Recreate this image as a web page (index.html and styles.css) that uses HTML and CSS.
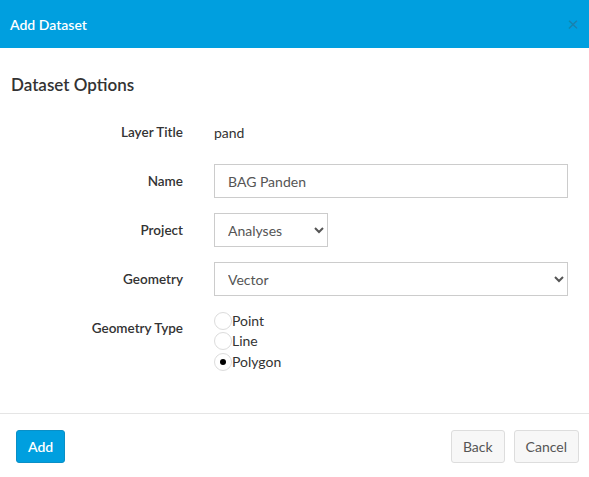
FILE: index.html
```html
<!DOCTYPE html>
<html lang="en">
<head>
<meta charset="UTF-8">
<title>Add Dataset</title>
<link rel="stylesheet" href="styles.css">
</head>
<body>

<div class="modal">
<div class="modal-header">
<h4>Add Dataset</h4>
<span class="close">&times;</span>
</div>

<div class="modal-body">
<h3>Dataset Options</h3>

<div class="form-row">
<label>Layer Title</label>
<div class="static">pand</div>
</div>

<div class="form-row">
<label>Name</label>
<input type="text" class="field" value="BAG Panden">
</div>

<div class="form-row">
<label>Project</label>
<select class="field small">
<option>Analyses</option>
</select>
</div>

<div class="form-row">
<label>Geometry</label>
<select class="field">
<option>Vector</option>
</select>
</div>

<div class="form-row radios-row">
<label>Geometry Type</label>
<div class="radios">
<label class="radio"><input type="radio" name="gtype">Point</label>
<label class="radio"><input type="radio" name="gtype">Line</label>
<label class="radio"><input type="radio" name="gtype" checked>Polygon</label>
</div>
</div>
</div>

<div class="modal-footer">
<button class="btn btn-primary">Add</button>
<div class="right">
<button class="btn">Back</button>
<button class="btn">Cancel</button>
</div>
</div>
</div>

</body>
</html>
```

FILE: styles.css
```css
* {
margin: 0;
padding: 0;
box-sizing: border-box;
font-family: Lato, "Open Sans", sans-serif;
}

body {
background: #ffffff;
color: #333333;
font-size: 14px;
}

/* Header */
.modal-header {
height: 48px;
background-color: #009fdf;
display: flex;
align-items: center;
justify-content: space-between;
padding: 0 10px 0 10px;
}

.modal-header h4 {
color: #ffffff;
font-size: 14px;
font-weight: 600;
}

.close {
color: #1a82b0;
font-size: 20px;
line-height: 1;
margin-top: -2px;
}

/* Body */
.modal-body {
padding: 25px 21px 0 11px;
height: 365px;
}

.modal-body h3 {
font-size: 17px;
font-weight: 600;
color: #333333;
line-height: 24px;
margin-bottom: 18px;
}

.form-row {
display: grid;
grid-template-columns: 172px 1fr;
column-gap: 31px;
align-items: center;
min-height: 34px;
margin-bottom: 15px;
}

.form-row > label {
text-align: right;
font-weight: 600;
font-size: 13.5px;
color: #333333;
}

.static {
font-size: 14px;
color: #333333;
}

.field {
height: 34px;
border: 1px solid #cccccc;
border-radius: 0;
background: #ffffff;
color: #555555;
font-size: 14px;
padding: 0 13px;
width: 100%;
}

select.field {
padding: 0 9px;
}

.field.small {
width: 114px;
}

.radios-row {
align-items: start;
}

.radios-row > label {
padding-top: 9px;
}

.radios {
display: flex;
flex-direction: column;
gap: 1px;
}

.radio {
display: flex;
align-items: center;
font-size: 14px;
color: #333333;
height: 19px;
}

.radio input {
appearance: none;
-webkit-appearance: none;
width: 18px;
height: 18px;
margin: 0;
border: 1px solid #dcdcdc;
border-radius: 50%;
background: #ffffff;
display: flex;
align-items: center;
justify-content: center;
}

.radio input:checked::after {
content: "";
width: 6px;
height: 6px;
border-radius: 50%;
background: #000000;
}

.radio:last-child {
margin-top: 1px;
}

/* Footer */
.modal-footer {
border-top: 1px solid #e5e5e5;
display: flex;
justify-content: space-between;
padding: 16px 10px 0 16px;
}

.right {
display: flex;
gap: 9px;
}

.btn {
height: 33px;
padding: 0 11px;
border: 1px solid #dddddd;
border-radius: 3px;
background-color: #f7f7f7;
color: #555555;
font-size: 14px;
}

.btn-primary {
background-color: #009fdf;
border-color: #0a8fc6;
color: #ffffff;
font-weight: 600;
width: 49px;
}
```
